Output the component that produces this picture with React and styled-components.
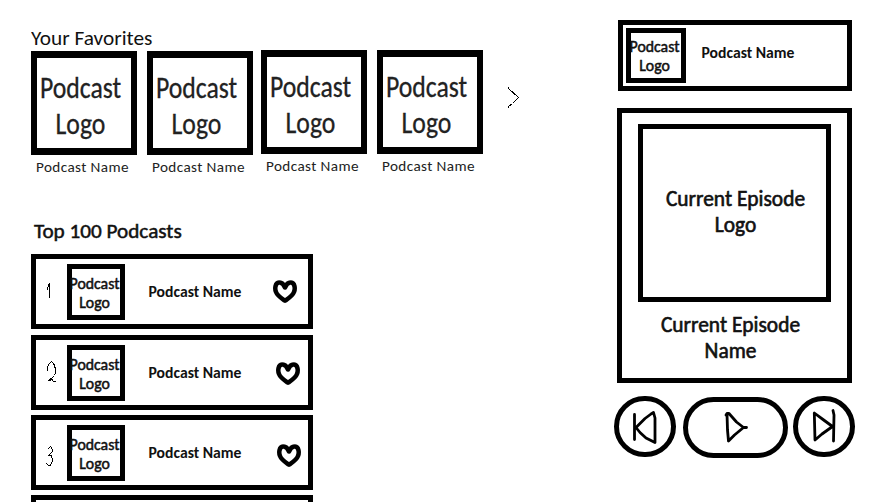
import React from "react";
import styled, { createGlobalStyle } from "styled-components";

const GlobalStyle = createGlobalStyle`
  * { box-sizing: border-box; }
  body { margin: 0; background: #fff; }
  h1, h2, p { margin: 0; font-weight: 400; }
  button { padding: 0; background: none; border: 0; cursor: pointer; }
  svg { display: block; }
`;

const Page = styled.main`
  display: flex;
  width: 873px;
  height: 502px;
  overflow: hidden;
  color: #111;
  font-family: Carlito, Calibri, Lato, sans-serif;
  white-space: nowrap;
`;

const Library = styled.div`
  width: 617px;
  padding: 25px 0 0 31px;
`;

const FavoritesTitle = styled.h1`
  height: 26px;
  font-size: 20.8px;
  line-height: 26px;
  transform: scaleX(1.025);
  transform-origin: left;
`;

const FavoritesRow = styled.div`
  display: flex;
  height: 171px;
`;

const Favorite = styled.article`
  width: 106px;
  margin: ${(p) => (p.$raised ? "-1px" : "0")} ${(p) => p.$gap}px 0 0;
`;

const FavoriteLogo = styled.div`
  height: 104px;
  padding-top: 11px;
  border: solid #000;
  border-width: 7px 6px;
`;

const FavoriteLogoText = styled.p`
  display: flex;
  flex-direction: column;
  align-items: center;
  font-size: 31px;
  line-height: 36px;
  color: #222;
  -webkit-text-stroke: 0.3px #222;
  transform: translate(-3.5px, 0.4px) scaleX(0.83);
`;

const FavoriteName = styled.p`
  padding: 2px 0 0 5px;
  font-size: 15.2px;
  line-height: 20px;
  letter-spacing: 0.4px;
  color: #222;
  transform: translateY(0.4px);
`;

const NextButton = styled.button`
  align-self: flex-start;
  margin: 36px 0 0 25px;
`;

const ChartTitle = styled.h2`
  height: 32px;
  padding-left: 3px;
  font-size: 21.2px;
  line-height: 18px;
  -webkit-text-stroke: 0.5px #111;
`;

const Chart = styled.div`
  display: flex;
  flex-direction: column;
`;

const ChartRow = styled.article`
  display: flex;
  flex-shrink: 0;
  width: 282px;
  height: 75px;
  margin-bottom: ${(p) => p.$gap}px;
  padding-top: 5px;
  border: 5px solid #000;
`;

const Rank = styled.div`
  width: 31px;
  padding: ${(p) => p.$top}px 0 0 10px;
`;

const SmallLogo = styled.div`
  width: ${(p) => (p.$wide ? 60 : 58)}px;
  height: ${(p) => (p.$wide ? 55 : 56)}px;
  padding-top: ${(p) => (p.$wide ? 4 : 5)}px;
  border: 5px solid #000;
  font-size: 15.8px;
  line-height: 19px;
  -webkit-text-stroke: 0.5px #111;
`;

const SmallLogoText = styled.p`
  display: flex;
  flex-direction: column;
  align-items: center;
  margin-left: ${(p) => (p.$wide ? -3 : -3)}px;
`;

const PodcastName = styled.p`
  width: 124px;
  padding: ${(p) => (p.$header ? "15px 0 0 15.5px" : "18px 0 0 23.5px")};
  font-size: 15.7px;
  font-weight: 700;
  line-height: 20px;
`;

const LikeButton = styled.button`
  align-self: flex-start;
  margin: ${(p) => p.$top}px 0 0 ${(p) => p.$left}px;
`;

const Player = styled.aside`
  width: 240px;
  padding-top: 20px;
`;

const NowPlaying = styled.header`
  display: flex;
  width: 234px;
  height: 71px;
  margin: 0 0 17px 1px;
  padding: 3px;
  border: 5px solid #000;
`;

const EpisodePanel = styled.section`
  width: 235px;
  height: 275px;
  padding: 11px 16px;
  border: 5px solid #000;
`;

const EpisodeText = styled.p`
  font-size: 21.4px;
  line-height: 26px;
  text-align: center;
  -webkit-text-stroke: 0.6px #111;
`;

const EpisodeLogo = styled.div`
  height: 178px;
  padding: 57px 0 0 2px;
  border: 5px solid #000;
`;

const EpisodeName = styled.div`
  padding: 10px 8px 0 0;
`;

const Controls = styled.div`
  display: flex;
  gap: 7px;
  margin: 13px 0 0 -3px;
`;

const ControlButton = styled.button`
  display: grid;
  place-items: center;
  flex-shrink: 0;
  width: ${(p) => (p.$wide ? 105 : 62)}px;
  height: 61px;
  margin-top: ${(p) => (p.$wide ? 1 : 0)}px;
  margin-right: ${(p) => (p.$wide ? -2 : 0)}px;
  border: 5px solid #000;
  border-radius: 31px;
`;

const Glyph = styled.svg`
  fill: none;
  stroke: #000;
  stroke-width: ${(p) => p.$weight}px;
  stroke-linecap: round;
  stroke-linejoin: round;
`;

const favorites = [
  { gap: 10, raised: false },
  { gap: 8, raised: false },
  { gap: 10, raised: true },
  { gap: 0, raised: true },
];

const chart = [
  { gap: 6, rankTop: 17, digit: "M3.5 17V2M2.5 3V6M1.5 6V9", heart: [16, 24] },
  {
    gap: 5,
    rankTop: 15,
    digit: "M1.5 11V7L3.5 3.5L5.5 1.5L8 4.5L9.5 9V13L8.5 15.5L3 20.5L6 19.5L7 21H10",
    heart: [17, 27],
  },
  {
    gap: 5,
    rankTop: 20,
    digit: "M2.5 3.5L4.5 1.5L6 4V7L3 10.5H5L6 13V17L4.5 20H1.5L0.5 18.5",
    heart: [19, 28],
  },
];

function LogoLabel({ wide }) {
  return (
    <SmallLogo $wide={wide}>
      <SmallLogoText $wide={wide}>
        <span>Podcast</span>
        <span>Logo</span>
      </SmallLogoText>
    </SmallLogo>
  );
}

export default function App() {
  return (
    <Page>
      <GlobalStyle />
      <Library>
        <FavoritesTitle>Your Favorites</FavoritesTitle>
        <FavoritesRow>
          {favorites.map((f, i) => (
            <Favorite key={i} $gap={f.gap} $raised={f.raised}>
              <FavoriteLogo>
                <FavoriteLogoText>
                  <span>Podcast</span>
                  <span>Logo</span>
                </FavoriteLogoText>
              </FavoriteLogo>
              <FavoriteName>Podcast Name</FavoriteName>
            </Favorite>
          ))}
          <NextButton aria-label="Next favorites">
            <Glyph $weight={1} width="12" height="22" shapeRendering="crispEdges">
              <path d="M0.5 0.5V1.5L10.5 10.5L4.5 16.5L0.5 19.5V20.5" />
            </Glyph>
          </NextButton>
        </FavoritesRow>
        <ChartTitle>Top 100 Podcasts</ChartTitle>
        <Chart>
          {chart.map((row, i) => (
            <ChartRow key={i} $gap={row.gap}>
              <Rank $top={row.rankTop}>
                <Glyph $weight={1} width="12" height="22" shapeRendering="crispEdges">
                  <path d={row.digit} />
                </Glyph>
              </Rank>
              <LogoLabel />
              <PodcastName>Podcast Name</PodcastName>
              <LikeButton aria-label="Like" $top={row.heart[0]} $left={row.heart[1]}>
                <Glyph $weight={4.5} width="24" height="24">
                  <path d="M12 7.5C10.5 4 8.5 2.2 6 2.6C2.2 3 1.6 8.5 3 12C4.5 16 9 18.5 12 20.7C15 18.5 19.5 16 21 12C22.4 8.5 21.8 3 18 2.6C15.5 2.2 13.5 4 12 7.5Z" />
                </Glyph>
              </LikeButton>
            </ChartRow>
          ))}
          <ChartRow $gap={0} />
        </Chart>
      </Library>
      <Player>
        <NowPlaying>
          <LogoLabel wide />
          <PodcastName $header>Podcast Name</PodcastName>
        </NowPlaying>
        <EpisodePanel>
          <EpisodeLogo>
            <EpisodeText>
              Current Episode
              <br />
              Logo
            </EpisodeText>
          </EpisodeLogo>
          <EpisodeName>
            <EpisodeText>
              Current Episode
              <br />
              Name
            </EpisodeText>
          </EpisodeName>
        </EpisodePanel>
        <Controls>
          <ControlButton aria-label="Previous">
            <Glyph $weight={2.8} width="52" height="51">
              <path d="M15.5 13.5V38.5M17 26.5L26 17.5L32 13L34.5 11.5L36 17L36 41.5L27 37L21 31.5Z" />
            </Glyph>
          </ControlButton>
          <ControlButton $wide aria-label="Play">
            <Glyph $weight={2.8} width="95" height="51">
              <path d="M38 13L39 11.5L41 11.5L48.5 20L55.5 25.5L46.5 33L40.5 39L39.5 28L39 12M55.5 25.5H58.5" />
            </Glyph>
          </ControlButton>
          <ControlButton aria-label="Next">
            <Glyph $weight={2.8} width="52" height="51">
              <path d="M16.3 12L17 39L24 33L34.5 25.5L25 18.5ZM35 9.5L36 14L35.5 40" />
            </Glyph>
          </ControlButton>
        </Controls>
      </Player>
    </Page>
  );
}
